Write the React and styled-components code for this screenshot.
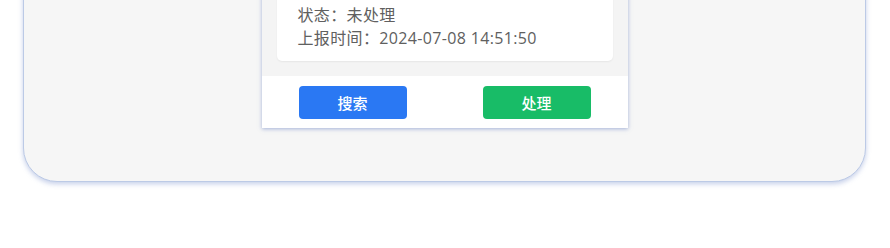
import React from "react"
import styled, { createGlobalStyle } from "styled-components"

const Global = createGlobalStyle`
  html, body {
    margin: 0;
    padding: 0;
    background: #ffffff;
    font-family: "Noto Sans CJK SC", "Noto Sans", sans-serif;
  }
`

const Stage = styled.div`
  width: 890px;
  height: 248px;
  overflow: hidden;
  padding: 0 24px 0 23px;
  box-sizing: border-box;
`

const Frame = styled.div`
  margin-top: -75px;
  padding: 30px 0 53px;
  background: #f6f6f6;
  border: 1px solid #bccae6;
  border-radius: 34px;
  box-shadow: 0 2px 5px rgba(110, 135, 200, 0.4);
  display: flex;
  justify-content: center;
`

const Phone = styled.div`
  width: 366px;
  background: #f4f4f4;
  box-shadow: 0 1px 4px rgba(95, 120, 190, 0.55);
  display: flex;
  flex-direction: column;
`

const Body = styled.div`
  padding: 15px 15px 15px;
`

const Card = styled.div`
  background: #ffffff;
  border-radius: 5px;
  padding: 10px 21px 11px;
  box-shadow: 0 1px 2px rgba(0, 0, 0, 0.06);
`

const Line = styled.div`
  font-family: "Open Sans", "Noto Sans CJK SC", sans-serif;
  font-size: 16px;
  line-height: 23px;
  letter-spacing: 0.35px;
  color: #606060;
  white-space: nowrap;
`

const Footer = styled.div`
  background: #ffffff;
  height: 52px;
  box-sizing: border-box;
  padding: 10px 37px 0;
  display: flex;
  justify-content: space-between;
  align-items: flex-start;
`

const Button = styled.button`
  width: 108px;
  height: 33px;
  border: none;
  border-radius: 4px;
  background: ${p => p.$color};
  color: #ffffff;
  font-family: inherit;
  font-size: 15px;
  font-weight: 500;
  padding: 0;
  cursor: pointer;
`

export default function App() {
  return (
    <>
      <Global />
      <Stage>
        <Frame>
          <Phone>
            <Body>
              <Card>
                <Line>事件类型：道路积水</Line>
                <Line>状态：未处理</Line>
                <Line>上报时间：2024-07-08 14:51:50</Line>
              </Card>
            </Body>
            <Footer>
              <Button $color="#2a78f3">搜索</Button>
              <Button $color="#18bc67">处理</Button>
            </Footer>
          </Phone>
        </Frame>
      </Stage>
    </>
  )
}
